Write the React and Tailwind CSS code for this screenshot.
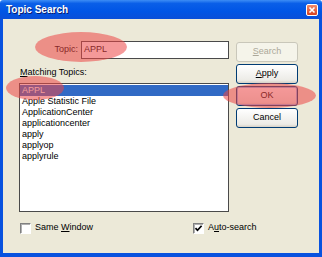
import React from "react";

function Btn({ children, disabled, isDefault }) {
  return (
    <div
      className={
        "h-[20px] w-[62px] flex items-center justify-center rounded-[3px] border text-[9px] " +
        (disabled
          ? "border-[#c9c7ba] text-[#aca899] bg-[#f5f4ea]"
          : isDefault
          ? "border-[#003c74] text-black bg-[linear-gradient(to_bottom,#ffffff,#ecebe6_85%,#d6d0c5)] shadow-[inset_0_0_0_1px_#9cb8ea]"
          : "border-[#003c74] text-black bg-[linear-gradient(to_bottom,#ffffff,#ecebe6_85%,#d6d0c5)]")
      }
    >
      {children}
    </div>
  );
}

function Check({ checked }) {
  return (
    <div className="w-[11px] h-[11px] border-t border-l border-b border-r border-t-[#808080] border-l-[#808080] border-b-[#ffffff] border-r-[#ffffff] bg-white flex items-center justify-center shadow-[inset_1px_1px_0_#b0b0b0]">
      {checked && (
        <svg width="9" height="9" viewBox="0 0 9 9">
          <path d="M1.5 4.2 L3.5 6.3 L7.6 1.8" stroke="#000" strokeWidth="1.7" fill="none" />
        </svg>
      )}
    </div>
  );
}

export default function App() {
  const items = [
    "APPL",
    "Apple Statistic File",
    "ApplicationCenter",
    "applicationcenter",
    "apply",
    "applyop",
    "applyrule",
  ];
  return (
    <div className="relative w-[322px] h-[257px] flex flex-col overflow-hidden font-['Liberation_Sans',Arial,sans-serif] text-[9px] text-black">
      <div className="h-[19px] flex items-center justify-between pl-[6px] pr-[4px] bg-[linear-gradient(to_bottom,#3d8df5_0%,#0a5fe8_18%,#0055e5_60%,#0a4fd8_100%)] rounded-t-[3px]">
        <span className="text-white font-bold text-[10px] leading-none [text-shadow:1px_1px_0_#0a1e6e]">
          Topic Search
        </span>
        <div className="w-[12px] h-[12px] mt-[1px] rounded-[2px] border border-white bg-[linear-gradient(to_bottom,#f08a6a,#d9411f)] flex items-center justify-center">
          <svg width="8" height="8" viewBox="0 0 8 8">
            <path d="M1.5 1.5 L6.5 6.5 M6.5 1.5 L1.5 6.5" stroke="#fff" strokeWidth="1.6" />
          </svg>
        </div>
      </div>
      <div className="flex-1 border-x-[3px] border-b-[4px] border-[#0852df] bg-[#ece9d8] pl-[16px] pt-[22px] flex flex-col">
        <div className="flex gap-[7px]">
          <div className="w-[210px] flex flex-col">
            <div className="flex h-[18px] items-center">
              <span className="flex-1 text-right pr-[3px]">Topic:</span>
              <div className="w-[148px] h-[18px] bg-white border border-[#4a4a4a] flex items-center pl-[2px]">
                APPL
              </div>
            </div>
            <div className="mt-[7px] h-[12px] leading-[12px] pl-[1px]">
              <span className="underline">M</span>atching Topics:
            </div>
            <div className="mt-[5px] h-[129px] bg-white border border-[#4a4a4a] pt-[1px] flex flex-col">
              {items.map((t, i) => (
                <div
                  key={t}
                  className={
                    "h-[11px] leading-[11px] pl-[2px] " +
                    (i === 0 ? "bg-[#316ac5] text-white" : "")
                  }
                >
                  {t}
                </div>
              ))}
            </div>
          </div>
          <div className="w-[62px] flex flex-col gap-[2px] pt-[1px]">
            <Btn disabled>
              <span className="underline">S</span>earch
            </Btn>
            <Btn>
              <span className="underline">A</span>pply
            </Btn>
            <Btn isDefault>OK</Btn>
            <Btn>Cancel</Btn>
          </div>
        </div>
        <div className="mt-[10px] h-[12px] flex items-center">
          <div className="w-[174px] flex items-center pl-[1px] gap-[4px]">
            <Check />
            <span>
              Same <span className="underline">W</span>indow
            </span>
          </div>
          <div className="flex items-center gap-[4px]">
            <Check checked />
            <span>
              A<span className="underline">u</span>to-search
            </span>
          </div>
        </div>
      </div>
      <div className="absolute left-[35px] top-[32px] w-[92px] h-[30px] rounded-[50%] bg-[rgba(236,70,70,0.55)] blur-[0.5px]" />
      <div className="absolute left-[6px] top-[76px] w-[58px] h-[24px] rounded-[50%] bg-[rgba(236,70,70,0.55)] blur-[0.5px]" />
      <div className="absolute left-[223px] top-[83px] w-[93px] h-[25px] rounded-[50%] bg-[rgba(236,70,70,0.55)] blur-[0.5px]" />
    </div>
  );
}
